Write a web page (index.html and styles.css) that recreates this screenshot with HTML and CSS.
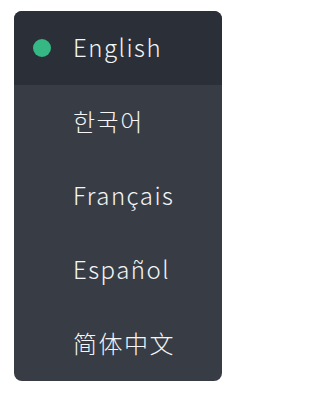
FILE: index.html
```html
<!DOCTYPE html>
<html lang="en">
<head>
<meta charset="utf-8">
<link rel="stylesheet" href="styles.css">
</head>
<body>
<ul class="menu">
  <li class="item active"><span class="dot"></span><span class="label">English</span></li>
  <li class="item"><span class="dot"></span><span class="label" lang="ko">한국어</span></li>
  <li class="item"><span class="dot"></span><span class="label">Français</span></li>
  <li class="item"><span class="dot"></span><span class="label">Español</span></li>
  <li class="item"><span class="dot"></span><span class="label" lang="zh-CN">简体中文</span></li>
</ul>
</body>
</html>
```
FILE: styles.css
```css
html, body {
  margin: 0;
  padding: 0;
  background: #ffffff;
}
body {
  padding: 11px 0 0 14px;
  font-family: "Noto Sans CJK KR", "Noto Sans CJK SC", "Noto Sans", sans-serif;
}
.menu {
  list-style: none;
  margin: 0;
  padding: 0;
  width: 208px;
  background: #383d45;
  border-radius: 8px;
  overflow: hidden;
}
.item {
  display: flex;
  align-items: center;
  height: 74px;
  box-sizing: border-box;
  padding: 0 0 3px 19px;
  gap: 22px;
  color: #f4f5f6;
  font-size: 24px;
  font-weight: 300;
  letter-spacing: 1.5px;
}
.item.active {
  background: #2b3038;
}
.dot {
  width: 18px;
  height: 18px;
  margin-top: 3px;
  border-radius: 50%;
  flex: none;
}
.active .dot {
  background: #35b883;
}
.label[lang="zh-CN"] {
  font-family: "Noto Sans CJK SC", sans-serif;
}
```
